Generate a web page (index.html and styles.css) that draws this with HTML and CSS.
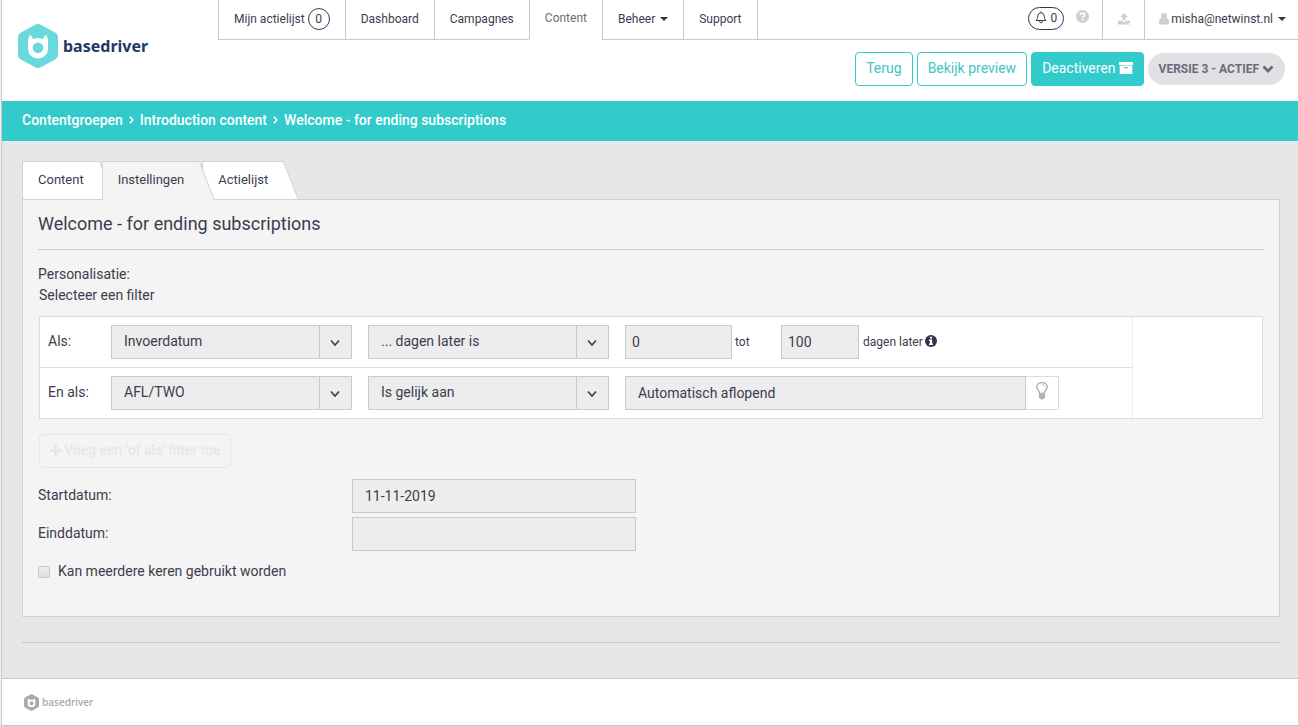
FILE: index.html
```html
<!DOCTYPE html>
<html lang="nl">
<head>
<meta charset="utf-8">
<meta name="viewport" content="width=device-width, initial-scale=1">
<title>Basedriver - Instellingen</title>
<link rel="stylesheet" href="styles.css">
</head>
<body>
<svg class="defs" aria-hidden="true">
  <symbol id="mark" viewBox="0 0 40 44">
    <path fill="currentColor" d="M17 .8Q20-.8 23 .8L37 8.500Q40 10.200 40 13.500V30.500Q40 33.800 37 35.500L23 43.200Q20 44.800 17 43.200L3 35.500Q0 33.800 0 30.500V13.500Q0 10.200 3 8.500Z"/>
    <path fill="#fff" fill-rule="evenodd" d="M12 11Q14.500 12 15 15.200Q20 12.800 25 15.200Q25.500 12 28 11Q30.500 14 30 18V25A10 9.500 0 0 1 10 25V18Q9.500 14 12 11ZM20 18.500A5.300 5.300 0 1 0 20 29.100A5.300 5.300 0 1 0 20 18.500Z"/>
  </symbol>
  <symbol id="chevron" viewBox="0 0 10 8"><path d="M1 1.500L5 6L9 1.500" fill="none" stroke="currentColor" stroke-width="1.600"/></symbol>
  <symbol id="slant" viewBox="0 0 16 38"><path d="M0 0H.500L15 38H0Z" fill="currentColor"/><path d="M.3 .3L15 38" fill="none" stroke="#d3d3d5"/></symbol>
  <symbol id="slant-active" viewBox="0 0 16 39"><path d="M0 0H.500L15.500 39H0Z" fill="currentColor"/><path d="M.3 .3L15.300 39" fill="none" stroke="#d3d3d5"/></symbol>
</svg>
<div class="page">
  <header class="header">
    <a class="logo" href="#"><svg class="logo-mark"><use href="#mark"/></svg><span>basedriver</span></a>
    <div class="header-main">
      <nav class="nav">
        <a href="#">Mijn actielijst <span class="count">0</span></a>
        <a href="#">Dashboard</a>
        <a href="#">Campagnes</a>
        <a href="#" class="current">Content</a>
        <a href="#">Beheer <i class="caret"></i></a>
        <a href="#">Support</a>
        <div class="nav-tools">
          <button class="bell" type="button" aria-label="Meldingen"><svg viewBox="0 0 12 13" width="12" height="13" fill="none" stroke="currentColor"><path d="M6 .3V1.500M1 9.500Q2.800 8 2.800 5.200Q2.800 1.800 6 1.800T9.200 5.200Q9.200 8 11 9.500ZM4.500 10Q4.700 11.800 6 11.800T7.500 10"/></svg>0</button>
          <button class="help" type="button" aria-label="Help"><svg viewBox="0 0 12 12" width="13" height="13"><circle cx="6" cy="6" r="6" fill="currentColor"/><path d="M4 4.600Q4 2.800 6 2.800T8 4.500Q8 5.300 7 5.800Q6.100 6.200 6.100 7.200" fill="none" stroke="#fff" stroke-width="1.600"/><path d="M5.200 8h1.700v1.600H5.200z" fill="#fff"/></svg></button>
        </div>
        <a href="#" class="tool" aria-label="Uploaden"><svg viewBox="0 0 12 12" width="12" height="12" fill="currentColor"><path d="M6 0L10 4.200H7.500V7.500H4.500V4.200H2ZM0 7.800H3.700Q4 9 6 9T8.300 7.800H12V11.500H0Z"/><path d="M8 10h1v.8H8zM10 10h1v.8h-1z" fill="#fff"/></svg></a>
        <a href="#" class="tool user"><svg viewBox="0 0 10 12" width="10" height="12" fill="currentColor"><circle cx="5" cy="3" r="3"/><path d="M2 5Q5 7.500 8 5Q10 5.500 10 9.500Q10 11.500 8 11.500H2Q0 11.500 0 9.500Q0 5.500 2 5Z"/></svg><span>misha@netwinst.nl</span><i class="caret"></i></a>
      </nav>
      <div class="actions">
        <button class="btn" type="button">Terug</button>
        <button class="btn" type="button">Bekijk preview</button>
        <button class="btn primary" type="button">Deactiveren <svg viewBox="0 0 14 12" width="14" height="12" fill="#fff"><path d="M0 0H14V3H0ZM.7 3.500H13.300V12H.7Z"/><path d="M5 5.200H9V6.300H5Z" fill="#32caca"/></svg></button>
        <button class="version" type="button">VERSIE 3 - ACTIEF <svg viewBox="0 0 12 9" width="12" height="9"><path d="M1.500 1.500L6 6L10.500 1.500" fill="none" stroke="currentColor" stroke-width="2.800"/></svg></button>
      </div>
    </div>
  </header>
  <nav class="crumbs" aria-label="Kruimelpad">
    <a href="#">Contentgroepen</a><svg viewBox="0 0 5 8" width="5" height="8"><path d="M.7 .7L4 4L.7 7.300"/></svg><a href="#">Introduction content</a><svg viewBox="0 0 5 8" width="5" height="8"><path d="M.7 .7L4 4L.7 7.300"/></svg><a href="#">Welcome - for ending subscriptions</a>
  </nav>
  <main class="main">
    <nav class="tabs">
      <a href="#">Content<svg><use href="#slant"/></svg></a>
      <a href="#" class="active">Instellingen<svg><use href="#slant-active"/></svg></a>
      <a href="#">Actielijst<svg><use href="#slant"/></svg></a>
    </nav>
    <section class="panel">
      <h1>Welcome - for ending subscriptions</h1>
      <p class="intro">Personalisatie:</p>
      <p class="intro filter-intro">Selecteer een filter</p>
      <div class="filters">
        <div class="rules">
          <div class="rule">
            <label for="f1">Als:</label>
            <div class="select"><select id="f1"><option>Invoerdatum</option></select><svg><use href="#chevron"/></svg></div>
            <div class="select"><select aria-label="Conditie"><option>... dagen later is</option></select><svg><use href="#chevron"/></svg></div>
            <div class="range">
              <input class="from" id="from" aria-label="Dagen vanaf" value="0" readonly>
              <label class="to" for="to">tot</label>
              <input class="until" id="to" value="100" readonly>
              <span>dagen later</span>
              <svg viewBox="0 0 12 12" width="12" height="12"><circle cx="6" cy="6" r="6" fill="#33334d"/><path d="M4.900 1.800h2.200v1.800H4.900zM4 4.600h3.100v3.900H8V10H4V8.500h.9V6H4z" fill="#fff"/></svg>
            </div>
          </div>
          <div class="rule">
            <label for="f2">En als:</label>
            <div class="select"><select id="f2"><option>AFL/TWO</option></select><svg><use href="#chevron"/></svg></div>
            <div class="select"><select aria-label="Conditie"><option>Is gelijk aan</option></select><svg><use href="#chevron"/></svg></div>
            <div class="value">
              <input aria-label="Waarde" value="Automatisch aflopend" readonly>
              <button type="button" aria-label="Suggesties"><svg viewBox="0 0 12 18" width="12" height="18"><path d="M3.600 11.500Q3.500 9.500 2 7.800Q.8 6.500 .8 5A5.200 4.400 0 0 1 11.200 5Q11.200 6.500 10 7.800Q8.500 9.500 8.400 11.500Z" fill="#fff" stroke="#b0b0b0" stroke-width="1.400"/><path d="M6.500 2.800Q8.800 3 9 4.800" fill="none" stroke="#b0b0b0" stroke-width=".8"/><path d="M3 11H9V15.500L7 17.500H5L3 15.500Z" fill="#b0b0b0"/></svg></button>
            </div>
          </div>
        </div>
        <div class="filters-side"></div>
      </div>
      <button class="add" type="button" disabled><svg viewBox="0 0 11 11" width="11" height="11"><path d="M4 0H7V4H11V7H7V11H4V7H0V4H4Z" fill="currentColor"/></svg>Voeg een 'of als' filter toe</button>
      <div class="field"><label for="start">Startdatum:</label><input id="start" value="11-11-2019" readonly></div>
      <div class="field"><label for="end">Einddatum:</label><input id="end" readonly></div>
      <label class="check"><input type="checkbox">Kan meerdere keren gebruikt worden</label>
    </section>
    <hr>
  </main>
  <footer class="footer"><svg class="foot-mark"><use href="#mark"/></svg><span>basedriver</span></footer>
</div>
</body>
</html>
```
FILE: styles.css
```css
* { box-sizing: border-box; }
body {
  margin: 0;
  padding-left: 1px;
  background: #f2f2f3;
  color: #3c3c4e;
  font: 14px/20px Roboto, sans-serif;
}
a { color: inherit; text-decoration: none; }
button, input, select { font: inherit; color: inherit; margin: 0; }
button { cursor: pointer; }
.defs { display: none; }
.page {
  display: flex;
  flex-direction: column;
  min-height: 100vh;
  border: 1px solid #c8c8cc;
  border-width: 0 0 1px 1px;
  background: #e7e7e9;
}

.header { display: flex; height: 101px; background: #fff; }
.logo {
  display: flex;
  align-items: center;
  gap: 5px;
  flex: 0 0 216px;
  height: 91px;
  padding-left: 16px;
  color: #1f3864;
  font: 700 16px/20px "Noto Sans", sans-serif;
}
.logo-mark { width: 40px; height: 44px; color: #6ad9de; }
.header-main { flex: 1; }
.nav {
  display: flex;
  height: 40px;
  font-size: 12px;
}
.nav > * {
  display: flex;
  align-items: center;
  padding: 0 15px 1px;
  border-left: 1px solid #c9c9cd;
  border-bottom: 1px solid #c9c9cd;
}
.nav .current { color: #6c6c78; border-bottom-color: transparent; padding-bottom: 3px; }
.count {
  width: 22px;
  height: 22px;
  margin-left: 3px;
  border: 1px solid #3c3c4e;
  border-radius: 50%;
  text-align: center;
}
.caret {
  margin-left: 5px;
  border: 4px solid transparent;
  border-top-color: #33334d;
  border-bottom: 0;
}
.nav .nav-tools { flex: 1; justify-content: flex-end; gap: 12px; padding: 0 13px; }
.bell {
  display: flex;
  align-items: center;
  gap: 3px;
  height: 23px;
  padding: 0 6px 2px;
  border: 1px solid #33334d;
  border-radius: 12px;
  background: none;
  margin-bottom: 2px;
}
.help { display: flex; padding: 0; border: 0; background: none; color: #cdcdd2; margin-bottom: 7px; }
.tool svg { color: #cdcdd2; }
.nav .tool { padding: 0 14px 2px 15px; }
.nav .user { padding: 0 12px 2px 14px; }
.user span { margin-left: 2px; }

.actions {
  display: flex;
  justify-content: flex-end;
  align-items: center;
  gap: 4px;
  padding: 12px 13px 0 0;
}
.btn {
  display: flex;
  align-items: center;
  gap: 3px;
  height: 34px;
  padding: 0 10px 2px;
  border: 1px solid #32caca;
  border-radius: 4px;
  background: #fff;
  color: #43c3c7;
}
.btn.primary { background: #32caca; color: #fff; }
.version {
  display: flex;
  align-items: center;
  gap: 3px;
  height: 32px;
  padding: 0 11px;
  border: 0;
  border-radius: 16px;
  background: #e0e0e5;
  color: #6b6b78;
  font-size: 12px;
  font-weight: 700;
}

.crumbs {
  display: flex;
  align-items: center;
  gap: 6px;
  height: 40px;
  padding: 0 20px 2px;
  background: #32caca;
  color: #fff;
  font-weight: 500;
}
.crumbs svg { fill: none; stroke: #fff; stroke-width: 1.5; }

.main { flex: 1; padding: 20px 18px 35px 20px; }
.tabs { display: flex; gap: 3px; height: 38px; font-size: 13px; }
.tabs a {
  position: relative;
  padding: 8px 15px;
  border: 1px solid #d3d3d5;
  border-width: 1px 0 0 1px;
  background: #fff;
}
.tabs svg { position: absolute; left: 100%; top: -1px; width: 16px; height: 38px; color: #fff; }
.tabs .active { z-index: 1; height: 39px; background: #f4f4f4; }
.tabs .active svg { height: 39px; color: #f4f4f4; }
.panel {
  padding: 14px 15px 35px;
  border: 1px solid #d3d3d5;
  background: #f4f4f4;
}
h1 {
  margin: 0 0 14px;
  padding-bottom: 15px;
  border-bottom: 1px solid #c9c9cd;
  font-size: 18px;
  line-height: 20px;
  font-weight: 400;
}
.intro { margin: 0; line-height: 21px; }
.filter-intro { padding-left: 1px; }
.filters {
  display: flex;
  margin: 10px 1px 15px;
  border: 1px solid #dcdcde;
  background: #fff;
}
.rules { flex: 1; }
.filters-side { flex: 0 0 130px; border-left: 1px solid #ebebec; }
.rule { display: flex; gap: 16px; padding: 8px; }
.rule + .rule { border-top: 1px solid #dcdcde; }
.rule > label { width: 47px; line-height: 32px; }
.select { position: relative; width: 241px; }
.select::after {
  content: "";
  position: absolute;
  top: 0;
  right: 32px;
  height: 100%;
  border-left: 1px solid #c9c9cd;
}
.select svg { position: absolute; right: 12px; top: 14px; width: 10px; height: 8px; }
select, input:not([type]) {
  width: 100%;
  height: 34px;
  border: 1px solid #c9c9cd;
  border-radius: 0;
  background: #ededed;
  outline: 0;
}
select { display: block; appearance: none; padding: 0 36px 2px 12px; }
input:not([type]) { padding: 0 12px; }
.range { display: flex; align-items: center; font-size: 12px; }
.range input:not([type]) { padding: 0 6px; font-size: 14px; }
.range input.from:not([type]) { width: 107px; }
.range input.until:not([type]) { width: 78px; }
.to { width: 49px; padding-left: 3px; }
.range span { margin: 0 2px 0 4px; }
.range svg { margin-bottom: 2px; }
.value { display: flex; width: 434px; }
.value button {
  flex: 0 0 33px;
  padding: 0 0 4px;
  border: 1px solid #dcdcde;
  border-left: 0;
  background: #fff;
}
.value svg { display: block; margin: 0 auto; }
.add {
  display: flex;
  align-items: center;
  gap: 3px;
  height: 34px;
  margin: 0 0 11px 1px;
  padding: 0 9px 2px 10px;
  border: 1px solid #e7e7e9;
  border-radius: 4px;
  background: none;
  color: #e7e7e9;
  font-weight: 500;
}
.field { display: flex; margin-bottom: 4px; }
.field label { width: 314px; line-height: 32px; }
.field input:not([type]) { width: 284px; }
.check { display: flex; align-items: center; gap: 8px; width: max-content; padding-top: 6px; }
.check input {
  appearance: none;
  width: 12px;
  height: 12px;
  margin-top: 2px;
  border: 1px solid #c9c9cd;
  border-radius: 2px;
  background: linear-gradient(#eee, #ddd);
}
hr { height: 1px; margin: 25px 0 0; border: 0; background: #c9c9cd; }
.footer {
  display: flex;
  align-items: center;
  gap: 3px;
  height: 47px;
  padding: 0 22px;
  border-top: 1px solid #c9c9cd;
  background: #fff;
  color: #aaa;
  font: 600 10px/16px "Open Sans", sans-serif;
}
.foot-mark { width: 15px; height: 17px; }
```
